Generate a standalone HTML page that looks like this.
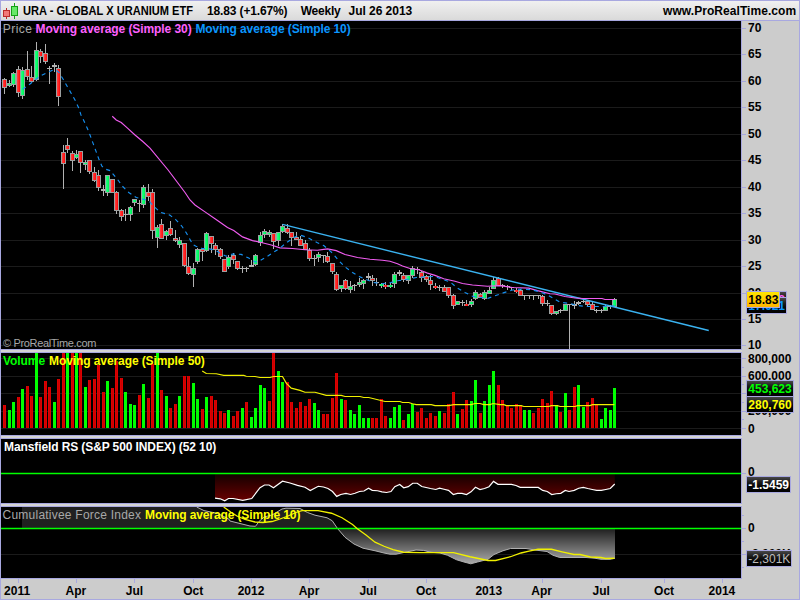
<!DOCTYPE html>
<html><head><meta charset="utf-8"><title>URA - GLOBAL X URANIUM ETF</title>
<style>html,body{margin:0;padding:0;background:#cccccc;overflow:hidden}svg{display:block;position:absolute;left:0;top:0}text{font-family:"Liberation Sans",sans-serif;font-weight:bold;font-size:12px}.c{shape-rendering:crispEdges}</style></head><body>
<svg width="800" height="600" viewBox="0 0 800 600">
<defs><linearGradient id="tb" x1="0" y1="0" x2="0" y2="1"><stop offset="0" stop-color="#f0f0f0"/><stop offset="1" stop-color="#dadada"/></linearGradient><linearGradient id="yl" x1="0" y1="0" x2="0" y2="1"><stop offset="0" stop-color="#ffe600"/><stop offset="1" stop-color="#ffb400"/></linearGradient><linearGradient id="dk" x1="0" y1="0" x2="0" y2="1"><stop offset="0" stop-color="#484848"/><stop offset="0.35" stop-color="#1c1c1c"/><stop offset="0.6" stop-color="#080808"/><stop offset="1" stop-color="#000000"/></linearGradient><linearGradient id="mr" gradientUnits="userSpaceOnUse" x1="0" y1="474" x2="0" y2="502"><stop offset="0" stop-color="#140000"/><stop offset="1" stop-color="#6c0000"/></linearGradient><linearGradient id="fg" gradientUnits="userSpaceOnUse" x1="0" y1="529" x2="0" y2="565"><stop offset="0" stop-color="#202020"/><stop offset="1" stop-color="#b0b0b0"/></linearGradient><clipPath id="cpP"><rect x="1" y="21" width="740" height="328"/></clipPath><clipPath id="cpV"><rect x="1" y="353" width="740" height="82"/></clipPath><clipPath id="cpM"><rect x="1" y="439" width="740" height="64"/></clipPath><clipPath id="cpF"><rect x="1" y="507" width="740" height="71"/></clipPath></defs>
<g class="c">
<rect x="0" y="0" width="800" height="600" fill="#a8a8e0"/>
<rect x="1" y="1" width="798" height="598" fill="#cccccc"/>
<rect x="1" y="1" width="798" height="19" fill="url(#tb)"/>
<rect x="1" y="20" width="798" height="1" fill="#a8a8e0"/>
<rect x="1" y="21" width="740" height="328" fill="#000"/>
<rect x="741" y="21" width="1" height="328" fill="#a8a8e0"/>
<rect x="1" y="353" width="740" height="82" fill="#000"/>
<rect x="741" y="353" width="1" height="82" fill="#a8a8e0"/>
<rect x="1" y="439" width="740" height="64" fill="#000"/>
<rect x="741" y="439" width="1" height="64" fill="#a8a8e0"/>
<rect x="1" y="507" width="740" height="71" fill="#000"/>
<rect x="741" y="507" width="1" height="71" fill="#a8a8e0"/>
<rect x="1" y="349" width="741" height="1" fill="#a8a8e0"/>
<rect x="1" y="350" width="741" height="2" fill="#d4d4d4"/>
<rect x="1" y="352" width="741" height="1" fill="#a8a8e0"/>
<rect x="1" y="435" width="741" height="1" fill="#a8a8e0"/>
<rect x="1" y="436" width="741" height="2" fill="#d4d4d4"/>
<rect x="1" y="438" width="741" height="1" fill="#a8a8e0"/>
<rect x="1" y="503" width="741" height="1" fill="#a8a8e0"/>
<rect x="1" y="504" width="741" height="2" fill="#d4d4d4"/>
<rect x="1" y="506" width="741" height="1" fill="#a8a8e0"/>
<rect x="1" y="578" width="741" height="1" fill="#a8a8e0"/>
<rect x="1" y="345" width="740" height="1" fill="#1b1b1b"/>
<rect x="742" y="345" width="4" height="1" fill="#a8a8e0"/>
<rect x="1" y="319" width="740" height="1" fill="#1b1b1b"/>
<rect x="742" y="319" width="4" height="1" fill="#a8a8e0"/>
<rect x="1" y="293" width="740" height="1" fill="#1b1b1b"/>
<rect x="742" y="293" width="4" height="1" fill="#a8a8e0"/>
<rect x="1" y="266" width="740" height="1" fill="#1b1b1b"/>
<rect x="742" y="266" width="4" height="1" fill="#a8a8e0"/>
<rect x="1" y="240" width="740" height="1" fill="#1b1b1b"/>
<rect x="742" y="240" width="4" height="1" fill="#a8a8e0"/>
<rect x="1" y="213" width="740" height="1" fill="#1b1b1b"/>
<rect x="742" y="213" width="4" height="1" fill="#a8a8e0"/>
<rect x="1" y="187" width="740" height="1" fill="#1b1b1b"/>
<rect x="742" y="187" width="4" height="1" fill="#a8a8e0"/>
<rect x="1" y="160" width="740" height="1" fill="#1b1b1b"/>
<rect x="742" y="160" width="4" height="1" fill="#a8a8e0"/>
<rect x="1" y="134" width="740" height="1" fill="#1b1b1b"/>
<rect x="742" y="134" width="4" height="1" fill="#a8a8e0"/>
<rect x="1" y="107" width="740" height="1" fill="#1b1b1b"/>
<rect x="742" y="107" width="4" height="1" fill="#a8a8e0"/>
<rect x="1" y="81" width="740" height="1" fill="#1b1b1b"/>
<rect x="742" y="81" width="4" height="1" fill="#a8a8e0"/>
<rect x="1" y="54" width="740" height="1" fill="#1b1b1b"/>
<rect x="742" y="54" width="4" height="1" fill="#a8a8e0"/>
<rect x="1" y="28" width="740" height="1" fill="#1b1b1b"/>
<rect x="742" y="28" width="4" height="1" fill="#a8a8e0"/>
<rect x="1" y="428" width="740" height="1" fill="#1b1b1b"/>
<rect x="1" y="411" width="740" height="1" fill="#1b1b1b"/>
<rect x="1" y="393" width="740" height="1" fill="#1b1b1b"/>
<rect x="1" y="376" width="740" height="1" fill="#1b1b1b"/>
<rect x="1" y="358" width="740" height="1" fill="#1b1b1b"/>
<rect x="742" y="428" width="4" height="1" fill="#a8a8e0"/>
<rect x="742" y="419" width="2" height="1" fill="#a8a8e0"/>
<rect x="742" y="411" width="4" height="1" fill="#a8a8e0"/>
<rect x="742" y="402" width="2" height="1" fill="#a8a8e0"/>
<rect x="742" y="393" width="4" height="1" fill="#a8a8e0"/>
<rect x="742" y="384" width="2" height="1" fill="#a8a8e0"/>
<rect x="742" y="376" width="4" height="1" fill="#a8a8e0"/>
<rect x="742" y="367" width="2" height="1" fill="#a8a8e0"/>
<rect x="742" y="358" width="4" height="1" fill="#a8a8e0"/>
<rect x="742" y="473" width="4" height="1" fill="#a8a8e0"/>
<rect x="1" y="554" width="740" height="1" fill="#1b1b1b"/>
<rect x="742" y="515" width="2" height="1" fill="#a8a8e0"/>
<rect x="742" y="528" width="4" height="1" fill="#a8a8e0"/>
<rect x="742" y="541" width="2" height="1" fill="#a8a8e0"/>
<rect x="742" y="554" width="4" height="1" fill="#a8a8e0"/>
<rect x="742" y="567" width="2" height="1" fill="#a8a8e0"/>
<rect x="18" y="579" width="1" height="4" fill="#a8a8e0"/>
<rect x="76" y="579" width="1" height="4" fill="#a8a8e0"/>
<rect x="134" y="579" width="1" height="4" fill="#a8a8e0"/>
<rect x="193" y="579" width="1" height="4" fill="#a8a8e0"/>
<rect x="251" y="579" width="1" height="4" fill="#a8a8e0"/>
<rect x="309" y="579" width="1" height="4" fill="#a8a8e0"/>
<rect x="368" y="579" width="1" height="4" fill="#a8a8e0"/>
<rect x="426" y="579" width="1" height="4" fill="#a8a8e0"/>
<rect x="489" y="579" width="1" height="4" fill="#a8a8e0"/>
<rect x="542" y="579" width="1" height="4" fill="#a8a8e0"/>
<rect x="601" y="579" width="1" height="4" fill="#a8a8e0"/>
<rect x="664" y="579" width="1" height="4" fill="#a8a8e0"/>
<rect x="722" y="579" width="1" height="4" fill="#a8a8e0"/>
</g>
<g clip-path="url(#cpP)">
<g class="c">
<rect x="4" y="78" width="1" height="16" fill="#b2b2b2"/>
<rect x="2" y="79" width="5" height="9" fill="#9ca0a0"/>
<rect x="3" y="80" width="1" height="7" fill="#ff3a3a"/>
<rect x="4" y="80" width="1" height="7" fill="#ff2626"/>
<rect x="5" y="80" width="1" height="7" fill="#ff1212"/>
<rect x="9" y="80" width="1" height="7" fill="#b2b2b2"/>
<rect x="7" y="83" width="5" height="3" fill="#9ca0a0"/>
<rect x="8" y="84" width="1" height="1" fill="#22ff80"/>
<rect x="9" y="84" width="1" height="1" fill="#10fc6e"/>
<rect x="10" y="84" width="1" height="1" fill="#00f85c"/>
<rect x="13" y="72" width="1" height="15" fill="#b2b2b2"/>
<rect x="11" y="73" width="5" height="12" fill="#9ca0a0"/>
<rect x="12" y="74" width="1" height="10" fill="#22ff80"/>
<rect x="13" y="74" width="1" height="10" fill="#10fc6e"/>
<rect x="14" y="74" width="1" height="10" fill="#00f85c"/>
<rect x="18" y="66" width="1" height="31" fill="#b2b2b2"/>
<rect x="16" y="69" width="5" height="24" fill="#9ca0a0"/>
<rect x="17" y="70" width="1" height="22" fill="#ff3a3a"/>
<rect x="18" y="70" width="1" height="22" fill="#ff2626"/>
<rect x="19" y="70" width="1" height="22" fill="#ff1212"/>
<rect x="22" y="67" width="1" height="32" fill="#b2b2b2"/>
<rect x="20" y="70" width="5" height="26" fill="#9ca0a0"/>
<rect x="21" y="71" width="1" height="24" fill="#22ff80"/>
<rect x="22" y="71" width="1" height="24" fill="#10fc6e"/>
<rect x="23" y="71" width="1" height="24" fill="#00f85c"/>
<rect x="27" y="51" width="1" height="29" fill="#b2b2b2"/>
<rect x="25" y="69" width="5" height="8" fill="#9ca0a0"/>
<rect x="26" y="70" width="1" height="6" fill="#ff3a3a"/>
<rect x="27" y="70" width="1" height="6" fill="#ff2626"/>
<rect x="28" y="70" width="1" height="6" fill="#ff1212"/>
<rect x="31" y="66" width="1" height="16" fill="#b2b2b2"/>
<rect x="29" y="77" width="5" height="5" fill="#9ca0a0"/>
<rect x="30" y="78" width="1" height="3" fill="#ff3a3a"/>
<rect x="31" y="78" width="1" height="3" fill="#ff2626"/>
<rect x="32" y="78" width="1" height="3" fill="#ff1212"/>
<rect x="36" y="42" width="1" height="39" fill="#b2b2b2"/>
<rect x="34" y="50" width="5" height="30" fill="#9ca0a0"/>
<rect x="35" y="51" width="1" height="28" fill="#22ff80"/>
<rect x="36" y="51" width="1" height="28" fill="#10fc6e"/>
<rect x="37" y="51" width="1" height="28" fill="#00f85c"/>
<rect x="40" y="49" width="1" height="14" fill="#b2b2b2"/>
<rect x="38" y="51" width="5" height="6" fill="#9ca0a0"/>
<rect x="39" y="52" width="1" height="4" fill="#ff3a3a"/>
<rect x="40" y="52" width="1" height="4" fill="#ff2626"/>
<rect x="41" y="52" width="1" height="4" fill="#ff1212"/>
<rect x="45" y="44" width="1" height="20" fill="#b2b2b2"/>
<rect x="43" y="53" width="5" height="9" fill="#9ca0a0"/>
<rect x="44" y="54" width="1" height="7" fill="#ff3a3a"/>
<rect x="45" y="54" width="1" height="7" fill="#ff2626"/>
<rect x="46" y="54" width="1" height="7" fill="#ff1212"/>
<rect x="49" y="66" width="1" height="18" fill="#b2b2b2"/>
<rect x="47" y="68" width="5" height="1" fill="#b2b2b2"/>
<rect x="54" y="63" width="1" height="9" fill="#b2b2b2"/>
<rect x="52" y="65" width="5" height="2" fill="#b2b2b2"/>
<rect x="58" y="65" width="1" height="41" fill="#b2b2b2"/>
<rect x="56" y="68" width="5" height="29" fill="#9ca0a0"/>
<rect x="57" y="69" width="1" height="27" fill="#ff3a3a"/>
<rect x="58" y="69" width="1" height="27" fill="#ff2626"/>
<rect x="59" y="69" width="1" height="27" fill="#ff1212"/>
<rect x="63" y="145" width="1" height="44" fill="#b2b2b2"/>
<rect x="61" y="152" width="5" height="12" fill="#9ca0a0"/>
<rect x="62" y="153" width="1" height="10" fill="#ff3a3a"/>
<rect x="63" y="153" width="1" height="10" fill="#ff2626"/>
<rect x="64" y="153" width="1" height="10" fill="#ff1212"/>
<rect x="67" y="138" width="1" height="15" fill="#b2b2b2"/>
<rect x="65" y="145" width="5" height="5" fill="#9ca0a0"/>
<rect x="66" y="146" width="1" height="3" fill="#ff3a3a"/>
<rect x="67" y="146" width="1" height="3" fill="#ff2626"/>
<rect x="68" y="146" width="1" height="3" fill="#ff1212"/>
<rect x="72" y="151" width="1" height="20" fill="#b2b2b2"/>
<rect x="70" y="153" width="5" height="8" fill="#9ca0a0"/>
<rect x="71" y="154" width="1" height="6" fill="#ff3a3a"/>
<rect x="72" y="154" width="1" height="6" fill="#ff2626"/>
<rect x="73" y="154" width="1" height="6" fill="#ff1212"/>
<rect x="76" y="150" width="1" height="9" fill="#b2b2b2"/>
<rect x="74" y="154" width="5" height="4" fill="#9ca0a0"/>
<rect x="75" y="155" width="1" height="2" fill="#22ff80"/>
<rect x="76" y="155" width="1" height="2" fill="#10fc6e"/>
<rect x="77" y="155" width="1" height="2" fill="#00f85c"/>
<rect x="80" y="151" width="1" height="22" fill="#b2b2b2"/>
<rect x="78" y="151" width="5" height="12" fill="#9ca0a0"/>
<rect x="79" y="152" width="1" height="10" fill="#ff3a3a"/>
<rect x="80" y="152" width="1" height="10" fill="#ff2626"/>
<rect x="81" y="152" width="1" height="10" fill="#ff1212"/>
<rect x="85" y="160" width="1" height="10" fill="#b2b2b2"/>
<rect x="83" y="162" width="5" height="3" fill="#9ca0a0"/>
<rect x="84" y="163" width="1" height="1" fill="#22ff80"/>
<rect x="85" y="163" width="1" height="1" fill="#10fc6e"/>
<rect x="86" y="163" width="1" height="1" fill="#00f85c"/>
<rect x="89" y="160" width="1" height="14" fill="#b2b2b2"/>
<rect x="87" y="160" width="5" height="12" fill="#9ca0a0"/>
<rect x="88" y="161" width="1" height="10" fill="#ff3a3a"/>
<rect x="89" y="161" width="1" height="10" fill="#ff2626"/>
<rect x="90" y="161" width="1" height="10" fill="#ff1212"/>
<rect x="94" y="167" width="1" height="15" fill="#b2b2b2"/>
<rect x="92" y="172" width="5" height="9" fill="#9ca0a0"/>
<rect x="93" y="173" width="1" height="7" fill="#ff3a3a"/>
<rect x="94" y="173" width="1" height="7" fill="#ff2626"/>
<rect x="95" y="173" width="1" height="7" fill="#ff1212"/>
<rect x="98" y="170" width="1" height="21" fill="#b2b2b2"/>
<rect x="96" y="175" width="5" height="13" fill="#9ca0a0"/>
<rect x="97" y="176" width="1" height="11" fill="#ff3a3a"/>
<rect x="98" y="176" width="1" height="11" fill="#ff2626"/>
<rect x="99" y="176" width="1" height="11" fill="#ff1212"/>
<rect x="103" y="185" width="1" height="11" fill="#b2b2b2"/>
<rect x="101" y="189" width="5" height="2" fill="#b2b2b2"/>
<rect x="107" y="175" width="1" height="21" fill="#b2b2b2"/>
<rect x="105" y="175" width="5" height="18" fill="#9ca0a0"/>
<rect x="106" y="176" width="1" height="16" fill="#22ff80"/>
<rect x="107" y="176" width="1" height="16" fill="#10fc6e"/>
<rect x="108" y="176" width="1" height="16" fill="#00f85c"/>
<rect x="112" y="179" width="1" height="14" fill="#b2b2b2"/>
<rect x="110" y="179" width="5" height="14" fill="#9ca0a0"/>
<rect x="111" y="180" width="1" height="12" fill="#ff3a3a"/>
<rect x="112" y="180" width="1" height="12" fill="#ff2626"/>
<rect x="113" y="180" width="1" height="12" fill="#ff1212"/>
<rect x="116" y="191" width="1" height="23" fill="#b2b2b2"/>
<rect x="114" y="192" width="5" height="19" fill="#9ca0a0"/>
<rect x="115" y="193" width="1" height="17" fill="#ff3a3a"/>
<rect x="116" y="193" width="1" height="17" fill="#ff2626"/>
<rect x="117" y="193" width="1" height="17" fill="#ff1212"/>
<rect x="121" y="209" width="1" height="12" fill="#b2b2b2"/>
<rect x="119" y="210" width="5" height="7" fill="#9ca0a0"/>
<rect x="120" y="211" width="1" height="5" fill="#ff3a3a"/>
<rect x="121" y="211" width="1" height="5" fill="#ff2626"/>
<rect x="122" y="211" width="1" height="5" fill="#ff1212"/>
<rect x="125" y="209" width="1" height="12" fill="#b2b2b2"/>
<rect x="123" y="214" width="5" height="1" fill="#b2b2b2"/>
<rect x="130" y="206" width="1" height="15" fill="#b2b2b2"/>
<rect x="128" y="207" width="5" height="8" fill="#9ca0a0"/>
<rect x="129" y="208" width="1" height="6" fill="#22ff80"/>
<rect x="130" y="208" width="1" height="6" fill="#10fc6e"/>
<rect x="131" y="208" width="1" height="6" fill="#00f85c"/>
<rect x="134" y="199" width="1" height="7" fill="#b2b2b2"/>
<rect x="132" y="199" width="5" height="4" fill="#9ca0a0"/>
<rect x="133" y="200" width="1" height="2" fill="#22ff80"/>
<rect x="134" y="200" width="1" height="2" fill="#10fc6e"/>
<rect x="135" y="200" width="1" height="2" fill="#00f85c"/>
<rect x="139" y="200" width="1" height="12" fill="#b2b2b2"/>
<rect x="137" y="203" width="5" height="1" fill="#b2b2b2"/>
<rect x="143" y="185" width="1" height="23" fill="#b2b2b2"/>
<rect x="141" y="187" width="5" height="18" fill="#9ca0a0"/>
<rect x="142" y="188" width="1" height="16" fill="#22ff80"/>
<rect x="143" y="188" width="1" height="16" fill="#10fc6e"/>
<rect x="144" y="188" width="1" height="16" fill="#00f85c"/>
<rect x="148" y="184" width="1" height="17" fill="#b2b2b2"/>
<rect x="146" y="192" width="5" height="5" fill="#9ca0a0"/>
<rect x="147" y="193" width="1" height="3" fill="#ff3a3a"/>
<rect x="148" y="193" width="1" height="3" fill="#ff2626"/>
<rect x="149" y="193" width="1" height="3" fill="#ff1212"/>
<rect x="152" y="189" width="1" height="50" fill="#b2b2b2"/>
<rect x="150" y="192" width="5" height="39" fill="#9ca0a0"/>
<rect x="151" y="193" width="1" height="37" fill="#ff3a3a"/>
<rect x="152" y="193" width="1" height="37" fill="#ff2626"/>
<rect x="153" y="193" width="1" height="37" fill="#ff1212"/>
<rect x="157" y="225" width="1" height="23" fill="#b2b2b2"/>
<rect x="155" y="227" width="5" height="11" fill="#9ca0a0"/>
<rect x="156" y="228" width="1" height="9" fill="#22ff80"/>
<rect x="157" y="228" width="1" height="9" fill="#10fc6e"/>
<rect x="158" y="228" width="1" height="9" fill="#00f85c"/>
<rect x="161" y="219" width="1" height="20" fill="#b2b2b2"/>
<rect x="159" y="224" width="5" height="15" fill="#9ca0a0"/>
<rect x="160" y="225" width="1" height="13" fill="#ff3a3a"/>
<rect x="161" y="225" width="1" height="13" fill="#ff2626"/>
<rect x="162" y="225" width="1" height="13" fill="#ff1212"/>
<rect x="166" y="230" width="1" height="10" fill="#b2b2b2"/>
<rect x="164" y="231" width="5" height="5" fill="#9ca0a0"/>
<rect x="165" y="232" width="1" height="3" fill="#22ff80"/>
<rect x="166" y="232" width="1" height="3" fill="#10fc6e"/>
<rect x="167" y="232" width="1" height="3" fill="#00f85c"/>
<rect x="170" y="221" width="1" height="15" fill="#b2b2b2"/>
<rect x="168" y="228" width="5" height="7" fill="#9ca0a0"/>
<rect x="169" y="229" width="1" height="5" fill="#ff3a3a"/>
<rect x="170" y="229" width="1" height="5" fill="#ff2626"/>
<rect x="171" y="229" width="1" height="5" fill="#ff1212"/>
<rect x="175" y="230" width="1" height="12" fill="#b2b2b2"/>
<rect x="173" y="238" width="5" height="3" fill="#9ca0a0"/>
<rect x="174" y="239" width="1" height="1" fill="#ff3a3a"/>
<rect x="175" y="239" width="1" height="1" fill="#ff2626"/>
<rect x="176" y="239" width="1" height="1" fill="#ff1212"/>
<rect x="179" y="237" width="1" height="11" fill="#b2b2b2"/>
<rect x="177" y="240" width="5" height="5" fill="#9ca0a0"/>
<rect x="178" y="241" width="1" height="3" fill="#22ff80"/>
<rect x="179" y="241" width="1" height="3" fill="#10fc6e"/>
<rect x="180" y="241" width="1" height="3" fill="#00f85c"/>
<rect x="184" y="243" width="1" height="24" fill="#b2b2b2"/>
<rect x="182" y="243" width="5" height="23" fill="#9ca0a0"/>
<rect x="183" y="244" width="1" height="21" fill="#ff3a3a"/>
<rect x="184" y="244" width="1" height="21" fill="#ff2626"/>
<rect x="185" y="244" width="1" height="21" fill="#ff1212"/>
<rect x="188" y="257" width="1" height="18" fill="#b2b2b2"/>
<rect x="186" y="266" width="5" height="8" fill="#9ca0a0"/>
<rect x="187" y="267" width="1" height="6" fill="#ff3a3a"/>
<rect x="188" y="267" width="1" height="6" fill="#ff2626"/>
<rect x="189" y="267" width="1" height="6" fill="#ff1212"/>
<rect x="193" y="263" width="1" height="24" fill="#b2b2b2"/>
<rect x="191" y="268" width="5" height="7" fill="#9ca0a0"/>
<rect x="192" y="269" width="1" height="5" fill="#22ff80"/>
<rect x="193" y="269" width="1" height="5" fill="#10fc6e"/>
<rect x="194" y="269" width="1" height="5" fill="#00f85c"/>
<rect x="197" y="248" width="1" height="16" fill="#b2b2b2"/>
<rect x="195" y="249" width="5" height="13" fill="#9ca0a0"/>
<rect x="196" y="250" width="1" height="11" fill="#22ff80"/>
<rect x="197" y="250" width="1" height="11" fill="#10fc6e"/>
<rect x="198" y="250" width="1" height="11" fill="#00f85c"/>
<rect x="202" y="249" width="1" height="12" fill="#b2b2b2"/>
<rect x="200" y="249" width="5" height="3" fill="#9ca0a0"/>
<rect x="201" y="250" width="1" height="1" fill="#ff3a3a"/>
<rect x="202" y="250" width="1" height="1" fill="#ff2626"/>
<rect x="203" y="250" width="1" height="1" fill="#ff1212"/>
<rect x="206" y="232" width="1" height="20" fill="#b2b2b2"/>
<rect x="204" y="233" width="5" height="18" fill="#9ca0a0"/>
<rect x="205" y="234" width="1" height="16" fill="#22ff80"/>
<rect x="206" y="234" width="1" height="16" fill="#10fc6e"/>
<rect x="207" y="234" width="1" height="16" fill="#00f85c"/>
<rect x="211" y="236" width="1" height="17" fill="#b2b2b2"/>
<rect x="209" y="236" width="5" height="8" fill="#9ca0a0"/>
<rect x="210" y="237" width="1" height="6" fill="#ff3a3a"/>
<rect x="211" y="237" width="1" height="6" fill="#ff2626"/>
<rect x="212" y="237" width="1" height="6" fill="#ff1212"/>
<rect x="215" y="243" width="1" height="12" fill="#b2b2b2"/>
<rect x="213" y="245" width="5" height="5" fill="#9ca0a0"/>
<rect x="214" y="246" width="1" height="3" fill="#ff3a3a"/>
<rect x="215" y="246" width="1" height="3" fill="#ff2626"/>
<rect x="216" y="246" width="1" height="3" fill="#ff1212"/>
<rect x="220" y="248" width="1" height="11" fill="#b2b2b2"/>
<rect x="218" y="249" width="5" height="8" fill="#9ca0a0"/>
<rect x="219" y="250" width="1" height="6" fill="#ff3a3a"/>
<rect x="220" y="250" width="1" height="6" fill="#ff2626"/>
<rect x="221" y="250" width="1" height="6" fill="#ff1212"/>
<rect x="224" y="259" width="1" height="13" fill="#b2b2b2"/>
<rect x="222" y="259" width="5" height="13" fill="#9ca0a0"/>
<rect x="223" y="260" width="1" height="11" fill="#ff3a3a"/>
<rect x="224" y="260" width="1" height="11" fill="#ff2626"/>
<rect x="225" y="260" width="1" height="11" fill="#ff1212"/>
<rect x="228" y="255" width="1" height="14" fill="#b2b2b2"/>
<rect x="226" y="257" width="5" height="10" fill="#9ca0a0"/>
<rect x="227" y="258" width="1" height="8" fill="#22ff80"/>
<rect x="228" y="258" width="1" height="8" fill="#10fc6e"/>
<rect x="229" y="258" width="1" height="8" fill="#00f85c"/>
<rect x="233" y="253" width="1" height="11" fill="#b2b2b2"/>
<rect x="231" y="255" width="5" height="5" fill="#9ca0a0"/>
<rect x="232" y="256" width="1" height="3" fill="#ff3a3a"/>
<rect x="233" y="256" width="1" height="3" fill="#ff2626"/>
<rect x="234" y="256" width="1" height="3" fill="#ff1212"/>
<rect x="237" y="261" width="1" height="9" fill="#b2b2b2"/>
<rect x="235" y="261" width="5" height="8" fill="#9ca0a0"/>
<rect x="236" y="262" width="1" height="6" fill="#ff3a3a"/>
<rect x="237" y="262" width="1" height="6" fill="#ff2626"/>
<rect x="238" y="262" width="1" height="6" fill="#ff1212"/>
<rect x="242" y="266" width="1" height="7" fill="#b2b2b2"/>
<rect x="240" y="268" width="5" height="1" fill="#b2b2b2"/>
<rect x="246" y="267" width="1" height="5" fill="#b2b2b2"/>
<rect x="244" y="268" width="5" height="1" fill="#b2b2b2"/>
<rect x="251" y="260" width="1" height="7" fill="#b2b2b2"/>
<rect x="249" y="265" width="5" height="2" fill="#b2b2b2"/>
<rect x="255" y="254" width="1" height="12" fill="#b2b2b2"/>
<rect x="253" y="255" width="5" height="10" fill="#9ca0a0"/>
<rect x="254" y="256" width="1" height="8" fill="#22ff80"/>
<rect x="255" y="256" width="1" height="8" fill="#10fc6e"/>
<rect x="256" y="256" width="1" height="8" fill="#00f85c"/>
<rect x="260" y="232" width="1" height="14" fill="#b2b2b2"/>
<rect x="258" y="235" width="5" height="8" fill="#9ca0a0"/>
<rect x="259" y="236" width="1" height="6" fill="#22ff80"/>
<rect x="260" y="236" width="1" height="6" fill="#10fc6e"/>
<rect x="261" y="236" width="1" height="6" fill="#00f85c"/>
<rect x="264" y="229" width="1" height="9" fill="#b2b2b2"/>
<rect x="262" y="231" width="5" height="4" fill="#9ca0a0"/>
<rect x="263" y="232" width="1" height="2" fill="#22ff80"/>
<rect x="264" y="232" width="1" height="2" fill="#10fc6e"/>
<rect x="265" y="232" width="1" height="2" fill="#00f85c"/>
<rect x="269" y="230" width="1" height="7" fill="#b2b2b2"/>
<rect x="267" y="232" width="5" height="3" fill="#9ca0a0"/>
<rect x="268" y="233" width="1" height="1" fill="#22ff80"/>
<rect x="269" y="233" width="1" height="1" fill="#10fc6e"/>
<rect x="270" y="233" width="1" height="1" fill="#00f85c"/>
<rect x="273" y="233" width="1" height="16" fill="#b2b2b2"/>
<rect x="271" y="233" width="5" height="9" fill="#9ca0a0"/>
<rect x="272" y="234" width="1" height="7" fill="#ff3a3a"/>
<rect x="273" y="234" width="1" height="7" fill="#ff2626"/>
<rect x="274" y="234" width="1" height="7" fill="#ff1212"/>
<rect x="278" y="232" width="1" height="14" fill="#b2b2b2"/>
<rect x="276" y="232" width="5" height="9" fill="#9ca0a0"/>
<rect x="277" y="233" width="1" height="7" fill="#22ff80"/>
<rect x="278" y="233" width="1" height="7" fill="#10fc6e"/>
<rect x="279" y="233" width="1" height="7" fill="#00f85c"/>
<rect x="282" y="224" width="1" height="9" fill="#b2b2b2"/>
<rect x="280" y="226" width="5" height="6" fill="#9ca0a0"/>
<rect x="281" y="227" width="1" height="4" fill="#22ff80"/>
<rect x="282" y="227" width="1" height="4" fill="#10fc6e"/>
<rect x="283" y="227" width="1" height="4" fill="#00f85c"/>
<rect x="287" y="224" width="1" height="10" fill="#b2b2b2"/>
<rect x="285" y="228" width="5" height="5" fill="#9ca0a0"/>
<rect x="286" y="229" width="1" height="3" fill="#ff3a3a"/>
<rect x="287" y="229" width="1" height="3" fill="#ff2626"/>
<rect x="288" y="229" width="1" height="3" fill="#ff1212"/>
<rect x="291" y="232" width="1" height="14" fill="#b2b2b2"/>
<rect x="289" y="232" width="5" height="6" fill="#9ca0a0"/>
<rect x="290" y="233" width="1" height="4" fill="#ff3a3a"/>
<rect x="291" y="233" width="1" height="4" fill="#ff2626"/>
<rect x="292" y="233" width="1" height="4" fill="#ff1212"/>
<rect x="296" y="232" width="1" height="8" fill="#b2b2b2"/>
<rect x="294" y="237" width="5" height="3" fill="#9ca0a0"/>
<rect x="295" y="238" width="1" height="1" fill="#ff3a3a"/>
<rect x="296" y="238" width="1" height="1" fill="#ff2626"/>
<rect x="297" y="238" width="1" height="1" fill="#ff1212"/>
<rect x="300" y="236" width="1" height="10" fill="#b2b2b2"/>
<rect x="298" y="239" width="5" height="7" fill="#9ca0a0"/>
<rect x="299" y="240" width="1" height="5" fill="#ff3a3a"/>
<rect x="300" y="240" width="1" height="5" fill="#ff2626"/>
<rect x="301" y="240" width="1" height="5" fill="#ff1212"/>
<rect x="305" y="240" width="1" height="10" fill="#b2b2b2"/>
<rect x="303" y="243" width="5" height="7" fill="#9ca0a0"/>
<rect x="304" y="244" width="1" height="5" fill="#ff3a3a"/>
<rect x="305" y="244" width="1" height="5" fill="#ff2626"/>
<rect x="306" y="244" width="1" height="5" fill="#ff1212"/>
<rect x="309" y="248" width="1" height="13" fill="#b2b2b2"/>
<rect x="307" y="250" width="5" height="9" fill="#9ca0a0"/>
<rect x="308" y="251" width="1" height="7" fill="#ff3a3a"/>
<rect x="309" y="251" width="1" height="7" fill="#ff2626"/>
<rect x="310" y="251" width="1" height="7" fill="#ff1212"/>
<rect x="314" y="255" width="1" height="11" fill="#b2b2b2"/>
<rect x="312" y="258" width="5" height="1" fill="#b2b2b2"/>
<rect x="318" y="252" width="1" height="10" fill="#b2b2b2"/>
<rect x="316" y="254" width="5" height="4" fill="#9ca0a0"/>
<rect x="317" y="255" width="1" height="2" fill="#22ff80"/>
<rect x="318" y="255" width="1" height="2" fill="#10fc6e"/>
<rect x="319" y="255" width="1" height="2" fill="#00f85c"/>
<rect x="323" y="255" width="1" height="8" fill="#b2b2b2"/>
<rect x="321" y="255" width="5" height="1" fill="#b2b2b2"/>
<rect x="327" y="252" width="1" height="11" fill="#b2b2b2"/>
<rect x="325" y="256" width="5" height="6" fill="#9ca0a0"/>
<rect x="326" y="257" width="1" height="4" fill="#ff3a3a"/>
<rect x="327" y="257" width="1" height="4" fill="#ff2626"/>
<rect x="328" y="257" width="1" height="4" fill="#ff1212"/>
<rect x="332" y="263" width="1" height="11" fill="#b2b2b2"/>
<rect x="330" y="263" width="5" height="9" fill="#9ca0a0"/>
<rect x="331" y="264" width="1" height="7" fill="#ff3a3a"/>
<rect x="332" y="264" width="1" height="7" fill="#ff2626"/>
<rect x="333" y="264" width="1" height="7" fill="#ff1212"/>
<rect x="336" y="272" width="1" height="19" fill="#b2b2b2"/>
<rect x="334" y="274" width="5" height="16" fill="#9ca0a0"/>
<rect x="335" y="275" width="1" height="14" fill="#ff3a3a"/>
<rect x="336" y="275" width="1" height="14" fill="#ff2626"/>
<rect x="337" y="275" width="1" height="14" fill="#ff1212"/>
<rect x="341" y="285" width="1" height="7" fill="#b2b2b2"/>
<rect x="339" y="285" width="5" height="4" fill="#9ca0a0"/>
<rect x="340" y="286" width="1" height="2" fill="#22ff80"/>
<rect x="341" y="286" width="1" height="2" fill="#10fc6e"/>
<rect x="342" y="286" width="1" height="2" fill="#00f85c"/>
<rect x="345" y="279" width="1" height="11" fill="#b2b2b2"/>
<rect x="343" y="280" width="5" height="9" fill="#9ca0a0"/>
<rect x="344" y="281" width="1" height="7" fill="#ff3a3a"/>
<rect x="345" y="281" width="1" height="7" fill="#ff2626"/>
<rect x="346" y="281" width="1" height="7" fill="#ff1212"/>
<rect x="350" y="281" width="1" height="12" fill="#b2b2b2"/>
<rect x="348" y="286" width="5" height="4" fill="#9ca0a0"/>
<rect x="349" y="287" width="1" height="2" fill="#22ff80"/>
<rect x="350" y="287" width="1" height="2" fill="#10fc6e"/>
<rect x="351" y="287" width="1" height="2" fill="#00f85c"/>
<rect x="354" y="284" width="1" height="7" fill="#b2b2b2"/>
<rect x="352" y="285" width="5" height="1" fill="#b2b2b2"/>
<rect x="359" y="278" width="1" height="9" fill="#b2b2b2"/>
<rect x="357" y="282" width="5" height="3" fill="#9ca0a0"/>
<rect x="358" y="283" width="1" height="1" fill="#22ff80"/>
<rect x="359" y="283" width="1" height="1" fill="#10fc6e"/>
<rect x="360" y="283" width="1" height="1" fill="#00f85c"/>
<rect x="363" y="279" width="1" height="10" fill="#b2b2b2"/>
<rect x="361" y="280" width="5" height="4" fill="#9ca0a0"/>
<rect x="362" y="281" width="1" height="2" fill="#22ff80"/>
<rect x="363" y="281" width="1" height="2" fill="#10fc6e"/>
<rect x="364" y="281" width="1" height="2" fill="#00f85c"/>
<rect x="368" y="273" width="1" height="8" fill="#b2b2b2"/>
<rect x="366" y="276" width="5" height="2" fill="#b2b2b2"/>
<rect x="372" y="275" width="1" height="11" fill="#b2b2b2"/>
<rect x="370" y="278" width="5" height="3" fill="#9ca0a0"/>
<rect x="371" y="279" width="1" height="1" fill="#ff3a3a"/>
<rect x="372" y="279" width="1" height="1" fill="#ff2626"/>
<rect x="373" y="279" width="1" height="1" fill="#ff1212"/>
<rect x="376" y="278" width="1" height="8" fill="#b2b2b2"/>
<rect x="374" y="282" width="5" height="1" fill="#b2b2b2"/>
<rect x="381" y="283" width="1" height="5" fill="#b2b2b2"/>
<rect x="379" y="284" width="5" height="2" fill="#9ca0a0"/>
<rect x="380" y="284" width="1" height="2" fill="#22ff80"/>
<rect x="381" y="284" width="1" height="2" fill="#10fc6e"/>
<rect x="382" y="284" width="1" height="2" fill="#00f85c"/>
<rect x="385" y="282" width="1" height="7" fill="#b2b2b2"/>
<rect x="383" y="285" width="5" height="2" fill="#9ca0a0"/>
<rect x="384" y="285" width="1" height="2" fill="#ff3a3a"/>
<rect x="385" y="285" width="1" height="2" fill="#ff2626"/>
<rect x="386" y="285" width="1" height="2" fill="#ff1212"/>
<rect x="390" y="283" width="1" height="5" fill="#b2b2b2"/>
<rect x="388" y="285" width="5" height="2" fill="#9ca0a0"/>
<rect x="389" y="285" width="1" height="2" fill="#22ff80"/>
<rect x="390" y="285" width="1" height="2" fill="#10fc6e"/>
<rect x="391" y="285" width="1" height="2" fill="#00f85c"/>
<rect x="394" y="272" width="1" height="16" fill="#b2b2b2"/>
<rect x="392" y="274" width="5" height="10" fill="#9ca0a0"/>
<rect x="393" y="275" width="1" height="8" fill="#22ff80"/>
<rect x="394" y="275" width="1" height="8" fill="#10fc6e"/>
<rect x="395" y="275" width="1" height="8" fill="#00f85c"/>
<rect x="399" y="270" width="1" height="6" fill="#b2b2b2"/>
<rect x="397" y="272" width="5" height="2" fill="#b2b2b2"/>
<rect x="403" y="273" width="1" height="9" fill="#b2b2b2"/>
<rect x="401" y="275" width="5" height="5" fill="#9ca0a0"/>
<rect x="402" y="276" width="1" height="3" fill="#ff3a3a"/>
<rect x="403" y="276" width="1" height="3" fill="#ff2626"/>
<rect x="404" y="276" width="1" height="3" fill="#ff1212"/>
<rect x="408" y="275" width="1" height="9" fill="#b2b2b2"/>
<rect x="406" y="275" width="5" height="6" fill="#9ca0a0"/>
<rect x="407" y="276" width="1" height="4" fill="#22ff80"/>
<rect x="408" y="276" width="1" height="4" fill="#10fc6e"/>
<rect x="409" y="276" width="1" height="4" fill="#00f85c"/>
<rect x="412" y="266" width="1" height="12" fill="#b2b2b2"/>
<rect x="410" y="268" width="5" height="8" fill="#9ca0a0"/>
<rect x="411" y="269" width="1" height="6" fill="#22ff80"/>
<rect x="412" y="269" width="1" height="6" fill="#10fc6e"/>
<rect x="413" y="269" width="1" height="6" fill="#00f85c"/>
<rect x="417" y="267" width="1" height="7" fill="#b2b2b2"/>
<rect x="415" y="269" width="5" height="1" fill="#b2b2b2"/>
<rect x="421" y="271" width="1" height="11" fill="#b2b2b2"/>
<rect x="419" y="272" width="5" height="6" fill="#9ca0a0"/>
<rect x="420" y="273" width="1" height="4" fill="#ff3a3a"/>
<rect x="421" y="273" width="1" height="4" fill="#ff2626"/>
<rect x="422" y="273" width="1" height="4" fill="#ff1212"/>
<rect x="426" y="275" width="1" height="7" fill="#b2b2b2"/>
<rect x="424" y="276" width="5" height="4" fill="#9ca0a0"/>
<rect x="425" y="277" width="1" height="2" fill="#ff3a3a"/>
<rect x="426" y="277" width="1" height="2" fill="#ff2626"/>
<rect x="427" y="277" width="1" height="2" fill="#ff1212"/>
<rect x="430" y="275" width="1" height="15" fill="#b2b2b2"/>
<rect x="428" y="280" width="5" height="5" fill="#9ca0a0"/>
<rect x="429" y="281" width="1" height="3" fill="#ff3a3a"/>
<rect x="430" y="281" width="1" height="3" fill="#ff2626"/>
<rect x="431" y="281" width="1" height="3" fill="#ff1212"/>
<rect x="435" y="283" width="1" height="6" fill="#b2b2b2"/>
<rect x="433" y="286" width="5" height="2" fill="#9ca0a0"/>
<rect x="434" y="286" width="1" height="2" fill="#ff3a3a"/>
<rect x="435" y="286" width="1" height="2" fill="#ff2626"/>
<rect x="436" y="286" width="1" height="2" fill="#ff1212"/>
<rect x="439" y="285" width="1" height="6" fill="#b2b2b2"/>
<rect x="437" y="287" width="5" height="1" fill="#b2b2b2"/>
<rect x="444" y="285" width="1" height="7" fill="#b2b2b2"/>
<rect x="442" y="287" width="5" height="5" fill="#9ca0a0"/>
<rect x="443" y="288" width="1" height="3" fill="#ff3a3a"/>
<rect x="444" y="288" width="1" height="3" fill="#ff2626"/>
<rect x="445" y="288" width="1" height="3" fill="#ff1212"/>
<rect x="448" y="287" width="1" height="11" fill="#b2b2b2"/>
<rect x="446" y="287" width="5" height="9" fill="#9ca0a0"/>
<rect x="447" y="288" width="1" height="7" fill="#ff3a3a"/>
<rect x="448" y="288" width="1" height="7" fill="#ff2626"/>
<rect x="449" y="288" width="1" height="7" fill="#ff1212"/>
<rect x="453" y="294" width="1" height="15" fill="#b2b2b2"/>
<rect x="451" y="295" width="5" height="11" fill="#9ca0a0"/>
<rect x="452" y="296" width="1" height="9" fill="#ff3a3a"/>
<rect x="453" y="296" width="1" height="9" fill="#ff2626"/>
<rect x="454" y="296" width="1" height="9" fill="#ff1212"/>
<rect x="457" y="301" width="1" height="4" fill="#b2b2b2"/>
<rect x="455" y="301" width="5" height="4" fill="#9ca0a0"/>
<rect x="456" y="302" width="1" height="2" fill="#22ff80"/>
<rect x="457" y="302" width="1" height="2" fill="#10fc6e"/>
<rect x="458" y="302" width="1" height="2" fill="#00f85c"/>
<rect x="462" y="300" width="1" height="6" fill="#b2b2b2"/>
<rect x="460" y="302" width="5" height="1" fill="#b2b2b2"/>
<rect x="466" y="300" width="1" height="6" fill="#b2b2b2"/>
<rect x="464" y="304" width="5" height="2" fill="#9ca0a0"/>
<rect x="465" y="304" width="1" height="2" fill="#ff3a3a"/>
<rect x="466" y="304" width="1" height="2" fill="#ff2626"/>
<rect x="467" y="304" width="1" height="2" fill="#ff1212"/>
<rect x="471" y="299" width="1" height="8" fill="#b2b2b2"/>
<rect x="469" y="301" width="5" height="4" fill="#9ca0a0"/>
<rect x="470" y="302" width="1" height="2" fill="#22ff80"/>
<rect x="471" y="302" width="1" height="2" fill="#10fc6e"/>
<rect x="472" y="302" width="1" height="2" fill="#00f85c"/>
<rect x="475" y="290" width="1" height="10" fill="#b2b2b2"/>
<rect x="473" y="292" width="5" height="7" fill="#9ca0a0"/>
<rect x="474" y="293" width="1" height="5" fill="#22ff80"/>
<rect x="475" y="293" width="1" height="5" fill="#10fc6e"/>
<rect x="476" y="293" width="1" height="5" fill="#00f85c"/>
<rect x="480" y="293" width="1" height="5" fill="#b2b2b2"/>
<rect x="478" y="294" width="5" height="4" fill="#9ca0a0"/>
<rect x="479" y="295" width="1" height="2" fill="#ff3a3a"/>
<rect x="480" y="295" width="1" height="2" fill="#ff2626"/>
<rect x="481" y="295" width="1" height="2" fill="#ff1212"/>
<rect x="484" y="290" width="1" height="10" fill="#b2b2b2"/>
<rect x="482" y="292" width="5" height="7" fill="#9ca0a0"/>
<rect x="483" y="293" width="1" height="5" fill="#22ff80"/>
<rect x="484" y="293" width="1" height="5" fill="#10fc6e"/>
<rect x="485" y="293" width="1" height="5" fill="#00f85c"/>
<rect x="489" y="287" width="1" height="7" fill="#b2b2b2"/>
<rect x="487" y="290" width="5" height="4" fill="#9ca0a0"/>
<rect x="488" y="291" width="1" height="2" fill="#22ff80"/>
<rect x="489" y="291" width="1" height="2" fill="#10fc6e"/>
<rect x="490" y="291" width="1" height="2" fill="#00f85c"/>
<rect x="493" y="277" width="1" height="12" fill="#b2b2b2"/>
<rect x="491" y="280" width="5" height="9" fill="#9ca0a0"/>
<rect x="492" y="281" width="1" height="7" fill="#22ff80"/>
<rect x="493" y="281" width="1" height="7" fill="#10fc6e"/>
<rect x="494" y="281" width="1" height="7" fill="#00f85c"/>
<rect x="498" y="277" width="1" height="9" fill="#b2b2b2"/>
<rect x="496" y="278" width="5" height="8" fill="#9ca0a0"/>
<rect x="497" y="279" width="1" height="6" fill="#ff3a3a"/>
<rect x="498" y="279" width="1" height="6" fill="#ff2626"/>
<rect x="499" y="279" width="1" height="6" fill="#ff1212"/>
<rect x="502" y="284" width="1" height="4" fill="#b2b2b2"/>
<rect x="500" y="285" width="5" height="1" fill="#b2b2b2"/>
<rect x="507" y="285" width="1" height="5" fill="#b2b2b2"/>
<rect x="505" y="286" width="5" height="1" fill="#b2b2b2"/>
<rect x="511" y="287" width="1" height="3" fill="#b2b2b2"/>
<rect x="509" y="287" width="5" height="1" fill="#b2b2b2"/>
<rect x="516" y="288" width="1" height="5" fill="#b2b2b2"/>
<rect x="514" y="290" width="5" height="2" fill="#9ca0a0"/>
<rect x="515" y="290" width="1" height="2" fill="#ff3a3a"/>
<rect x="516" y="290" width="1" height="2" fill="#ff2626"/>
<rect x="517" y="290" width="1" height="2" fill="#ff1212"/>
<rect x="520" y="289" width="1" height="7" fill="#b2b2b2"/>
<rect x="518" y="290" width="5" height="6" fill="#9ca0a0"/>
<rect x="519" y="291" width="1" height="4" fill="#ff3a3a"/>
<rect x="520" y="291" width="1" height="4" fill="#ff2626"/>
<rect x="521" y="291" width="1" height="4" fill="#ff1212"/>
<rect x="524" y="295" width="1" height="5" fill="#b2b2b2"/>
<rect x="522" y="295" width="5" height="1" fill="#b2b2b2"/>
<rect x="529" y="295" width="1" height="4" fill="#b2b2b2"/>
<rect x="527" y="295" width="5" height="1" fill="#b2b2b2"/>
<rect x="533" y="295" width="1" height="5" fill="#b2b2b2"/>
<rect x="531" y="295" width="5" height="1" fill="#b2b2b2"/>
<rect x="538" y="295" width="1" height="4" fill="#b2b2b2"/>
<rect x="536" y="295" width="5" height="1" fill="#b2b2b2"/>
<rect x="542" y="295" width="1" height="11" fill="#b2b2b2"/>
<rect x="540" y="296" width="5" height="8" fill="#9ca0a0"/>
<rect x="541" y="297" width="1" height="6" fill="#ff3a3a"/>
<rect x="542" y="297" width="1" height="6" fill="#ff2626"/>
<rect x="543" y="297" width="1" height="6" fill="#ff1212"/>
<rect x="547" y="300" width="1" height="6" fill="#b2b2b2"/>
<rect x="545" y="303" width="5" height="1" fill="#b2b2b2"/>
<rect x="551" y="305" width="1" height="10" fill="#b2b2b2"/>
<rect x="549" y="305" width="5" height="9" fill="#9ca0a0"/>
<rect x="550" y="306" width="1" height="7" fill="#ff3a3a"/>
<rect x="551" y="306" width="1" height="7" fill="#ff2626"/>
<rect x="552" y="306" width="1" height="7" fill="#ff1212"/>
<rect x="556" y="311" width="1" height="4" fill="#b2b2b2"/>
<rect x="554" y="311" width="5" height="3" fill="#9ca0a0"/>
<rect x="555" y="312" width="1" height="1" fill="#22ff80"/>
<rect x="556" y="312" width="1" height="1" fill="#10fc6e"/>
<rect x="557" y="312" width="1" height="1" fill="#00f85c"/>
<rect x="560" y="309" width="1" height="4" fill="#b2b2b2"/>
<rect x="558" y="310" width="5" height="1" fill="#b2b2b2"/>
<rect x="565" y="304" width="1" height="7" fill="#b2b2b2"/>
<rect x="563" y="304" width="5" height="7" fill="#9ca0a0"/>
<rect x="564" y="305" width="1" height="5" fill="#22ff80"/>
<rect x="565" y="305" width="1" height="5" fill="#10fc6e"/>
<rect x="566" y="305" width="1" height="5" fill="#00f85c"/>
<rect x="569" y="304" width="1" height="45" fill="#b2b2b2"/>
<rect x="567" y="304" width="5" height="1" fill="#b2b2b2"/>
<rect x="574" y="301" width="1" height="8" fill="#b2b2b2"/>
<rect x="572" y="304" width="5" height="2" fill="#b2b2b2"/>
<rect x="578" y="301" width="1" height="4" fill="#b2b2b2"/>
<rect x="576" y="302" width="5" height="2" fill="#b2b2b2"/>
<rect x="583" y="299" width="1" height="4" fill="#b2b2b2"/>
<rect x="581" y="301" width="5" height="1" fill="#b2b2b2"/>
<rect x="587" y="301" width="1" height="6" fill="#b2b2b2"/>
<rect x="585" y="301" width="5" height="4" fill="#9ca0a0"/>
<rect x="586" y="302" width="1" height="2" fill="#ff3a3a"/>
<rect x="587" y="302" width="1" height="2" fill="#ff2626"/>
<rect x="588" y="302" width="1" height="2" fill="#ff1212"/>
<rect x="592" y="301" width="1" height="9" fill="#b2b2b2"/>
<rect x="590" y="304" width="5" height="6" fill="#9ca0a0"/>
<rect x="591" y="305" width="1" height="4" fill="#ff3a3a"/>
<rect x="592" y="305" width="1" height="4" fill="#ff2626"/>
<rect x="593" y="305" width="1" height="4" fill="#ff1212"/>
<rect x="596" y="309" width="1" height="4" fill="#b2b2b2"/>
<rect x="594" y="310" width="5" height="1" fill="#b2b2b2"/>
<rect x="601" y="309" width="1" height="4" fill="#b2b2b2"/>
<rect x="599" y="310" width="5" height="1" fill="#b2b2b2"/>
<rect x="605" y="304" width="1" height="7" fill="#b2b2b2"/>
<rect x="603" y="306" width="5" height="5" fill="#9ca0a0"/>
<rect x="604" y="307" width="1" height="3" fill="#22ff80"/>
<rect x="605" y="307" width="1" height="3" fill="#10fc6e"/>
<rect x="606" y="307" width="1" height="3" fill="#00f85c"/>
<rect x="610" y="305" width="1" height="4" fill="#b2b2b2"/>
<rect x="608" y="306" width="5" height="1" fill="#b2b2b2"/>
<rect x="614" y="298" width="1" height="9" fill="#b2b2b2"/>
<rect x="612" y="299" width="5" height="8" fill="#9ca0a0"/>
<rect x="613" y="300" width="1" height="6" fill="#22ff80"/>
<rect x="614" y="300" width="1" height="6" fill="#10fc6e"/>
<rect x="615" y="300" width="1" height="6" fill="#00f85c"/>
</g>
<polyline points="282.5,224.4 708.75,330.5" fill="none" stroke="#3ab2f0" stroke-width="1.4"/>
<polyline points="112.25,116.25 116.25,120 121.25,122.5 127.5,128.1 135,135 142.5,141.25 150,148.1 168.1,170 177.5,182.5 185,192.5 190,200 195,205 205,211.9 215,218.75 227.5,227.5 233.75,230.5 242.5,236.9 252.5,240.6 261.25,242.5 271.25,245 280,247.9 292.5,248.5 305,249.75 317.5,250.25 323.75,249.4 327.5,248.9 336.25,250.6 345,254.5 357.5,257.5 370,259.2 382.5,260.3 390,261.25 397.5,263.75 402.5,266 410,268.5 418.75,269.8 427.5,273.1 435,275.4 443.75,278.75 455,281.25 462.5,283.5 472.5,285 487.5,286.25 500,285.6 512.5,287.5 528.75,288.1 537.5,290.6 550,293.75 555,294 565,296.5 575,298 583,298.5 602,298.5 605,299.5 614.5,299.5" fill="none" stroke="#f05cf0" stroke-width="1.15"/>
<polyline points="22.5,89.4 30,84 40,76 53,70 56,70 59,72.5 63,79 67,86 71,93 75,100 78.5,107.5 81,115 83.5,120 87.5,128.75 90,135 98.75,158.75 101.9,166.25 106.25,169.4 110,170.6 117.5,179.4 122.5,186.25 128.75,192.5 136.25,197.5 143.75,199.4 148.75,200.6 153.75,206.25 160,212.1 169.75,215.1 175.75,219.6 181.75,226 186.25,232.75 190,239.5 193,244.75 196,246.25 202,248.5 209.5,248.9 215,250 220,253.1 226.25,256.25 232.5,254 241.25,254.4 248.75,258.1 255,261.9 259.4,261 267.5,256.25 280,248.1 287.5,241.9 295,236.9 300,235 307.5,237.5 317.5,242.75 323.75,245.6 332.5,253.1 338.75,260.6 345,266.9 352.5,272.5 360,276.9 367.5,280 373.75,282.5 381.25,283.75 390,282.75 397.5,280.8 407.5,279.2 416.25,277.5 427.5,276.6 435,276.5 442.5,279.4 450,281.9 457.5,288.1 465,292.5 472.5,296.25 477.5,296.9 487.5,298.5 493.75,296.25 502.5,293.1 512.5,290 522.5,289 531.25,289.75 540,291.9 547.5,295 555,299.4 560,302.25 570,303.5 578,305.5 585,306.5 603,306.5 611,306 614.5,305.8" fill="none" stroke="#1690f0" stroke-width="1.15" stroke-dasharray="4,4"/>
</g>
<g clip-path="url(#cpV)">
<g class="c">
<rect x="3" y="405" width="3" height="23" fill="#de0000"/>
<rect x="4" y="405" width="1" height="23" fill="#cc0000"/>
<rect x="8" y="410" width="3" height="18" fill="#00ff00"/>
<rect x="12" y="402" width="3" height="26" fill="#00ff00"/>
<rect x="17" y="397" width="3" height="31" fill="#de0000"/>
<rect x="18" y="397" width="1" height="31" fill="#cc0000"/>
<rect x="21" y="389" width="3" height="39" fill="#00ff00"/>
<rect x="26" y="386" width="3" height="42" fill="#de0000"/>
<rect x="27" y="386" width="1" height="42" fill="#cc0000"/>
<rect x="30" y="396" width="3" height="32" fill="#de0000"/>
<rect x="31" y="396" width="1" height="32" fill="#cc0000"/>
<rect x="35" y="353" width="3" height="75" fill="#00ff00"/>
<rect x="39" y="397" width="3" height="31" fill="#de0000"/>
<rect x="40" y="397" width="1" height="31" fill="#cc0000"/>
<rect x="44" y="381" width="3" height="47" fill="#de0000"/>
<rect x="45" y="381" width="1" height="47" fill="#cc0000"/>
<rect x="48" y="387" width="3" height="41" fill="#de0000"/>
<rect x="49" y="387" width="1" height="41" fill="#cc0000"/>
<rect x="53" y="402" width="3" height="26" fill="#00ff00"/>
<rect x="57" y="379" width="3" height="49" fill="#de0000"/>
<rect x="58" y="379" width="1" height="49" fill="#cc0000"/>
<rect x="62" y="353" width="3" height="75" fill="#de0000"/>
<rect x="63" y="353" width="1" height="75" fill="#cc0000"/>
<rect x="66" y="353" width="3" height="75" fill="#00ff00"/>
<rect x="71" y="353" width="3" height="75" fill="#de0000"/>
<rect x="72" y="353" width="1" height="75" fill="#cc0000"/>
<rect x="75" y="353" width="3" height="75" fill="#00ff00"/>
<rect x="79" y="353" width="3" height="75" fill="#de0000"/>
<rect x="80" y="353" width="1" height="75" fill="#cc0000"/>
<rect x="84" y="387" width="3" height="41" fill="#00ff00"/>
<rect x="88" y="380" width="3" height="48" fill="#de0000"/>
<rect x="89" y="380" width="1" height="48" fill="#cc0000"/>
<rect x="93" y="379" width="3" height="49" fill="#de0000"/>
<rect x="94" y="379" width="1" height="49" fill="#cc0000"/>
<rect x="97" y="365" width="3" height="63" fill="#de0000"/>
<rect x="98" y="365" width="1" height="63" fill="#cc0000"/>
<rect x="102" y="392" width="3" height="36" fill="#de0000"/>
<rect x="103" y="392" width="1" height="36" fill="#cc0000"/>
<rect x="106" y="381" width="3" height="47" fill="#00ff00"/>
<rect x="111" y="388" width="3" height="40" fill="#de0000"/>
<rect x="112" y="388" width="1" height="40" fill="#cc0000"/>
<rect x="115" y="361" width="3" height="67" fill="#de0000"/>
<rect x="116" y="361" width="1" height="67" fill="#cc0000"/>
<rect x="120" y="378" width="3" height="50" fill="#de0000"/>
<rect x="121" y="378" width="1" height="50" fill="#cc0000"/>
<rect x="124" y="392" width="3" height="36" fill="#00ff00"/>
<rect x="129" y="404" width="3" height="24" fill="#00ff00"/>
<rect x="133" y="405" width="3" height="23" fill="#00ff00"/>
<rect x="138" y="395" width="3" height="33" fill="#de0000"/>
<rect x="139" y="395" width="1" height="33" fill="#cc0000"/>
<rect x="142" y="384" width="3" height="44" fill="#00ff00"/>
<rect x="147" y="398" width="3" height="30" fill="#de0000"/>
<rect x="148" y="398" width="1" height="30" fill="#cc0000"/>
<rect x="151" y="364" width="3" height="64" fill="#de0000"/>
<rect x="152" y="364" width="1" height="64" fill="#cc0000"/>
<rect x="156" y="353" width="3" height="75" fill="#00ff00"/>
<rect x="160" y="390" width="3" height="38" fill="#de0000"/>
<rect x="161" y="390" width="1" height="38" fill="#cc0000"/>
<rect x="165" y="396" width="3" height="32" fill="#00ff00"/>
<rect x="169" y="408" width="3" height="20" fill="#de0000"/>
<rect x="170" y="408" width="1" height="20" fill="#cc0000"/>
<rect x="174" y="404" width="3" height="24" fill="#de0000"/>
<rect x="175" y="404" width="1" height="24" fill="#cc0000"/>
<rect x="178" y="396" width="3" height="32" fill="#00ff00"/>
<rect x="183" y="376" width="3" height="52" fill="#de0000"/>
<rect x="184" y="376" width="1" height="52" fill="#cc0000"/>
<rect x="187" y="376" width="3" height="52" fill="#de0000"/>
<rect x="188" y="376" width="1" height="52" fill="#cc0000"/>
<rect x="192" y="383" width="3" height="45" fill="#00ff00"/>
<rect x="196" y="399" width="3" height="29" fill="#00ff00"/>
<rect x="201" y="409" width="3" height="19" fill="#de0000"/>
<rect x="202" y="409" width="1" height="19" fill="#cc0000"/>
<rect x="205" y="397" width="3" height="31" fill="#00ff00"/>
<rect x="210" y="396" width="3" height="32" fill="#de0000"/>
<rect x="211" y="396" width="1" height="32" fill="#cc0000"/>
<rect x="214" y="400" width="3" height="28" fill="#de0000"/>
<rect x="215" y="400" width="1" height="28" fill="#cc0000"/>
<rect x="219" y="411" width="3" height="17" fill="#de0000"/>
<rect x="220" y="411" width="1" height="17" fill="#cc0000"/>
<rect x="223" y="413" width="3" height="15" fill="#de0000"/>
<rect x="224" y="413" width="1" height="15" fill="#cc0000"/>
<rect x="227" y="410" width="3" height="18" fill="#00ff00"/>
<rect x="232" y="416" width="3" height="12" fill="#de0000"/>
<rect x="233" y="416" width="1" height="12" fill="#cc0000"/>
<rect x="236" y="411" width="3" height="17" fill="#de0000"/>
<rect x="237" y="411" width="1" height="17" fill="#cc0000"/>
<rect x="241" y="408" width="3" height="20" fill="#00ff00"/>
<rect x="245" y="402" width="3" height="26" fill="#de0000"/>
<rect x="246" y="402" width="1" height="26" fill="#cc0000"/>
<rect x="250" y="417" width="3" height="11" fill="#00ff00"/>
<rect x="254" y="408" width="3" height="20" fill="#00ff00"/>
<rect x="259" y="385" width="3" height="43" fill="#00ff00"/>
<rect x="263" y="388" width="3" height="40" fill="#00ff00"/>
<rect x="268" y="401" width="3" height="27" fill="#de0000"/>
<rect x="269" y="401" width="1" height="27" fill="#cc0000"/>
<rect x="272" y="353" width="3" height="75" fill="#de0000"/>
<rect x="273" y="353" width="1" height="75" fill="#cc0000"/>
<rect x="277" y="371" width="3" height="57" fill="#00ff00"/>
<rect x="281" y="382" width="3" height="46" fill="#00ff00"/>
<rect x="286" y="382" width="3" height="46" fill="#de0000"/>
<rect x="287" y="382" width="1" height="46" fill="#cc0000"/>
<rect x="290" y="402" width="3" height="26" fill="#de0000"/>
<rect x="291" y="402" width="1" height="26" fill="#cc0000"/>
<rect x="295" y="408" width="3" height="20" fill="#de0000"/>
<rect x="296" y="408" width="1" height="20" fill="#cc0000"/>
<rect x="299" y="402" width="3" height="26" fill="#de0000"/>
<rect x="300" y="402" width="1" height="26" fill="#cc0000"/>
<rect x="304" y="406" width="3" height="22" fill="#de0000"/>
<rect x="305" y="406" width="1" height="22" fill="#cc0000"/>
<rect x="308" y="399" width="3" height="29" fill="#de0000"/>
<rect x="309" y="399" width="1" height="29" fill="#cc0000"/>
<rect x="313" y="403" width="3" height="25" fill="#00ff00"/>
<rect x="317" y="410" width="3" height="18" fill="#00ff00"/>
<rect x="322" y="414" width="3" height="14" fill="#de0000"/>
<rect x="323" y="414" width="1" height="14" fill="#cc0000"/>
<rect x="326" y="414" width="3" height="14" fill="#de0000"/>
<rect x="327" y="414" width="1" height="14" fill="#cc0000"/>
<rect x="331" y="398" width="3" height="30" fill="#de0000"/>
<rect x="332" y="398" width="1" height="30" fill="#cc0000"/>
<rect x="335" y="373" width="3" height="55" fill="#de0000"/>
<rect x="336" y="373" width="1" height="55" fill="#cc0000"/>
<rect x="340" y="399" width="3" height="29" fill="#00ff00"/>
<rect x="344" y="400" width="3" height="28" fill="#de0000"/>
<rect x="345" y="400" width="1" height="28" fill="#cc0000"/>
<rect x="349" y="410" width="3" height="18" fill="#00ff00"/>
<rect x="353" y="414" width="3" height="14" fill="#00ff00"/>
<rect x="358" y="405" width="3" height="23" fill="#00ff00"/>
<rect x="362" y="418" width="3" height="10" fill="#00ff00"/>
<rect x="367" y="418" width="3" height="10" fill="#00ff00"/>
<rect x="371" y="418" width="3" height="10" fill="#de0000"/>
<rect x="372" y="418" width="1" height="10" fill="#cc0000"/>
<rect x="375" y="418" width="3" height="10" fill="#de0000"/>
<rect x="376" y="418" width="1" height="10" fill="#cc0000"/>
<rect x="380" y="399" width="3" height="29" fill="#de0000"/>
<rect x="381" y="399" width="1" height="29" fill="#cc0000"/>
<rect x="384" y="416" width="3" height="12" fill="#de0000"/>
<rect x="385" y="416" width="1" height="12" fill="#cc0000"/>
<rect x="389" y="418" width="3" height="10" fill="#00ff00"/>
<rect x="393" y="407" width="3" height="21" fill="#00ff00"/>
<rect x="398" y="405" width="3" height="23" fill="#00ff00"/>
<rect x="402" y="420" width="3" height="8" fill="#de0000"/>
<rect x="403" y="420" width="1" height="8" fill="#cc0000"/>
<rect x="407" y="414" width="3" height="14" fill="#00ff00"/>
<rect x="411" y="404" width="3" height="24" fill="#00ff00"/>
<rect x="416" y="412" width="3" height="16" fill="#de0000"/>
<rect x="417" y="412" width="1" height="16" fill="#cc0000"/>
<rect x="420" y="408" width="3" height="20" fill="#de0000"/>
<rect x="421" y="408" width="1" height="20" fill="#cc0000"/>
<rect x="425" y="418" width="3" height="10" fill="#de0000"/>
<rect x="426" y="418" width="1" height="10" fill="#cc0000"/>
<rect x="429" y="413" width="3" height="15" fill="#de0000"/>
<rect x="430" y="413" width="1" height="15" fill="#cc0000"/>
<rect x="434" y="416" width="3" height="12" fill="#de0000"/>
<rect x="435" y="416" width="1" height="12" fill="#cc0000"/>
<rect x="438" y="411" width="3" height="17" fill="#00ff00"/>
<rect x="443" y="413" width="3" height="15" fill="#de0000"/>
<rect x="444" y="413" width="1" height="15" fill="#cc0000"/>
<rect x="447" y="404" width="3" height="24" fill="#de0000"/>
<rect x="448" y="404" width="1" height="24" fill="#cc0000"/>
<rect x="452" y="392" width="3" height="36" fill="#de0000"/>
<rect x="453" y="392" width="1" height="36" fill="#cc0000"/>
<rect x="456" y="414" width="3" height="14" fill="#00ff00"/>
<rect x="461" y="409" width="3" height="19" fill="#de0000"/>
<rect x="462" y="409" width="1" height="19" fill="#cc0000"/>
<rect x="465" y="400" width="3" height="28" fill="#de0000"/>
<rect x="466" y="400" width="1" height="28" fill="#cc0000"/>
<rect x="470" y="401" width="3" height="27" fill="#00ff00"/>
<rect x="474" y="380" width="3" height="48" fill="#00ff00"/>
<rect x="479" y="413" width="3" height="15" fill="#de0000"/>
<rect x="480" y="413" width="1" height="15" fill="#cc0000"/>
<rect x="483" y="401" width="3" height="27" fill="#00ff00"/>
<rect x="488" y="385" width="3" height="43" fill="#00ff00"/>
<rect x="492" y="371" width="3" height="57" fill="#00ff00"/>
<rect x="497" y="385" width="3" height="43" fill="#de0000"/>
<rect x="498" y="385" width="1" height="43" fill="#cc0000"/>
<rect x="501" y="400" width="3" height="28" fill="#de0000"/>
<rect x="502" y="400" width="1" height="28" fill="#cc0000"/>
<rect x="506" y="406" width="3" height="22" fill="#de0000"/>
<rect x="507" y="406" width="1" height="22" fill="#cc0000"/>
<rect x="510" y="408" width="3" height="20" fill="#de0000"/>
<rect x="511" y="408" width="1" height="20" fill="#cc0000"/>
<rect x="515" y="404" width="3" height="24" fill="#de0000"/>
<rect x="516" y="404" width="1" height="24" fill="#cc0000"/>
<rect x="519" y="406" width="3" height="22" fill="#de0000"/>
<rect x="520" y="406" width="1" height="22" fill="#cc0000"/>
<rect x="523" y="410" width="3" height="18" fill="#00ff00"/>
<rect x="528" y="410" width="3" height="18" fill="#00ff00"/>
<rect x="532" y="413" width="3" height="15" fill="#de0000"/>
<rect x="533" y="413" width="1" height="15" fill="#cc0000"/>
<rect x="537" y="408" width="3" height="20" fill="#de0000"/>
<rect x="538" y="408" width="1" height="20" fill="#cc0000"/>
<rect x="541" y="399" width="3" height="29" fill="#de0000"/>
<rect x="542" y="399" width="1" height="29" fill="#cc0000"/>
<rect x="546" y="403" width="3" height="25" fill="#de0000"/>
<rect x="547" y="403" width="1" height="25" fill="#cc0000"/>
<rect x="550" y="391" width="3" height="37" fill="#de0000"/>
<rect x="551" y="391" width="1" height="37" fill="#cc0000"/>
<rect x="555" y="406" width="3" height="22" fill="#00ff00"/>
<rect x="559" y="412" width="3" height="16" fill="#de0000"/>
<rect x="560" y="412" width="1" height="16" fill="#cc0000"/>
<rect x="564" y="393" width="3" height="35" fill="#00ff00"/>
<rect x="568" y="410" width="3" height="18" fill="#de0000"/>
<rect x="569" y="410" width="1" height="18" fill="#cc0000"/>
<rect x="573" y="387" width="3" height="41" fill="#de0000"/>
<rect x="574" y="387" width="1" height="41" fill="#cc0000"/>
<rect x="577" y="385" width="3" height="43" fill="#00ff00"/>
<rect x="582" y="407" width="3" height="21" fill="#00ff00"/>
<rect x="586" y="402" width="3" height="26" fill="#de0000"/>
<rect x="587" y="402" width="1" height="26" fill="#cc0000"/>
<rect x="591" y="398" width="3" height="30" fill="#de0000"/>
<rect x="592" y="398" width="1" height="30" fill="#cc0000"/>
<rect x="595" y="405" width="3" height="23" fill="#de0000"/>
<rect x="596" y="405" width="1" height="23" fill="#cc0000"/>
<rect x="600" y="419" width="3" height="9" fill="#00ff00"/>
<rect x="604" y="408" width="3" height="20" fill="#00ff00"/>
<rect x="609" y="410" width="3" height="18" fill="#00ff00"/>
<rect x="613" y="388" width="3" height="40" fill="#00ff00"/>
</g>
<polyline points="202.25,371 206.25,373.5 216.25,373.75 223.75,375.4 243.75,375.4 246.25,376.25 255,376.5 260,377.5 270,377.5 273.75,376.5 282.5,376.5 286.25,383.1 291.25,388.1 300,390.4 305,392.25 315,392.25 326.25,395.4 341.25,395.4 345,396.5 360,396.5 363.75,397.5 368.75,397.5 385,401.5 400,401.5 402.5,402.5 408.75,402.5 412.5,403.75 416.25,404.6 431.25,404.6 435,405.6 448.75,405.6 453.75,404.6 471.25,404.6 475,403.5 480,403.5 483.75,404.6 490,404.6 493,403.5 500,404.6 503.75,404.6 506.25,405.6 521.25,405.6 523.75,406.5 548.75,406.5 551.25,405.6 557.5,405.6 560,406.5 575,406.5 577.5,405.6 590,405.6 592.5,404.6 614.4,404.6" fill="none" stroke="#f0f000" stroke-width="1.2"/>
</g>
<g clip-path="url(#cpM)">
<polygon points="215,473 215,498.2 220.25,498.8 224.75,500.75 228.5,498.5 233,498.5 242.75,500.4 251.75,498.5 260,487.7 264.5,485 269,485 273.5,487.7 282.5,481.25 290,483 297.5,485.4 305,487.25 310.25,490.6 318.25,486.25 323.5,487 328,488.5 332.5,491.5 336.7,496.4 340.75,494.5 346,493.3 350.5,494.5 355,493.3 359.5,491.5 364,491 368.5,488.2 372.25,490.3 377.5,490.75 382,491.8 386.5,492.5 391,491.5 394.75,486.7 399.7,484.5 403.75,487.75 408.25,486.7 412.75,483.25 417.25,483.25 421.75,486.5 430.5,488.5 435.75,489.5 439.5,488.2 444,489.25 448.5,490.4 453.3,494.5 457.5,493.3 462,493.3 466.5,494.5 471,491.8 475.5,487.3 480,489.5 484.5,488.5 489,486.7 493.5,481.4 498,484.3 511.5,484.3 516,485.5 520.2,487.4 538.25,487.4 542.75,490.4 547.25,491.5 551.75,494.5 556.25,493.75 560.75,493.3 565.25,490.4 569,491.5 574.25,490.4 578.75,488.2 583.25,487.3 587.75,488.5 592.25,489.5 596.75,490.4 601.25,490.4 605.75,489.5 610.25,488.5 614.75,484 614.75,473" fill="url(#mr)"/>
<line x1="1" y1="473.5" x2="741" y2="473.5" stroke="#00ff00" stroke-width="1.4"/>
<polyline points="215,498.2 220.25,498.8 224.75,500.75 228.5,498.5 233,498.5 242.75,500.4 251.75,498.5 260,487.7 264.5,485 269,485 273.5,487.7 282.5,481.25 290,483 297.5,485.4 305,487.25 310.25,490.6 318.25,486.25 323.5,487 328,488.5 332.5,491.5 336.7,496.4 340.75,494.5 346,493.3 350.5,494.5 355,493.3 359.5,491.5 364,491 368.5,488.2 372.25,490.3 377.5,490.75 382,491.8 386.5,492.5 391,491.5 394.75,486.7 399.7,484.5 403.75,487.75 408.25,486.7 412.75,483.25 417.25,483.25 421.75,486.5 430.5,488.5 435.75,489.5 439.5,488.2 444,489.25 448.5,490.4 453.3,494.5 457.5,493.3 462,493.3 466.5,494.5 471,491.8 475.5,487.3 480,489.5 484.5,488.5 489,486.7 493.5,481.4 498,484.3 511.5,484.3 516,485.5 520.2,487.4 538.25,487.4 542.75,490.4 547.25,491.5 551.75,494.5 556.25,493.75 560.75,493.3 565.25,490.4 569,491.5 574.25,490.4 578.75,488.2 583.25,487.3 587.75,488.5 592.25,489.5 596.75,490.4 601.25,490.4 605.75,489.5 610.25,488.5 614.75,484" fill="none" stroke="#ffffff" stroke-width="1.2"/>
</g>
<g clip-path="url(#cpF)">
<polygon points="22,528 22,480 180,480 196.7,507 204,510.6 217.5,513.4 228.75,519 230,521 240,523.5 250,526 255.5,526.3 259,521.5 264,517 272,515 282,509 286,508.2 300,508.5 307.5,512.5 315,515.2 327,517.75 332.25,520.75 337.5,528.5 345,537.25 354,544 363,548.2 375,550.75 384,553 390,554.2 396,554.2 405,552.25 414,550.4 416,550 423.5,550.4 431,552.25 440,553 447.5,555.25 456.5,559.75 464,562 470.75,563.8 477.5,562 488,559.3 494,554.5 503,550.75 510.5,548.5 526,548.5 535,550 547,551.5 553,555.25 559.75,557.5 586,557.5 595,558.25 601,559.3 610,559.3 615,558.25 615,528" fill="url(#fg)"/>
<polyline points="22,480 180,480 196.7,507 204,510.6 217.5,513.4 228.75,519 230,521 240,523.5 250,526 255.5,526.3 259,521.5 264,517 272,515 282,509 286,508.2 300,508.5 307.5,512.5 315,515.2 327,517.75 332.25,520.75 337.5,528.5 345,537.25 354,544 363,548.2 375,550.75 384,553 390,554.2 396,554.2 405,552.25 414,550.4 416,550 423.5,550.4 431,552.25 440,553 447.5,555.25 456.5,559.75 464,562 470.75,563.8 477.5,562 488,559.3 494,554.5 503,550.75 510.5,548.5 526,548.5 535,550 547,551.5 553,555.25 559.75,557.5 586,557.5 595,558.25 601,559.3 610,559.3 615,558.25" fill="none" stroke="#b0b0b0" stroke-width="1"/>
<line x1="1" y1="528.5" x2="741" y2="528.5" stroke="#00ff00" stroke-width="1.4"/>
<polyline points="223.7,507 231,512.3 237,516 245,519.5 255,522 263,522.5 272,521.5 280,519 288,516 296,512.5 302,510.7 306,510.7 318,510.7 331.5,513.25 342,517.75 352.5,524.5 357,528.5 366,535 375,542.2 384,546.25 393,549.7 403.5,552.25 420,552.7 453.5,552.7 470,556.75 488,560.5 495.5,560.5 510.5,556.75 521,553 529,551.2 538,549.25 551.5,549.25 562,551.8 574,554.5 580,554.5 590.5,557 601,557.5 605.5,558.5 614.5,558.25" fill="none" stroke="#f0f000" stroke-width="1.3"/>
</g>
<g class="c"><rect x="6" y="8" width="1" height="11" fill="#bb2a2a"/><rect x="3" y="10" width="7" height="7" fill="#bb2a2a"/><rect x="4" y="11" width="5" height="5" fill="#f27878"/><rect x="14" y="3" width="1" height="16" fill="#14a014"/><rect x="11" y="6" width="7" height="10" fill="#14a014"/><rect x="12" y="7" width="5" height="8" fill="#66e866"/></g>
<text x="23.04" y="14.5" textLength="169.96" lengthAdjust="spacingAndGlyphs" fill="#000" style="font-weight:bold;font-size:12px">URA - GLOBAL X URANIUM ETF</text>
<text x="207.0" y="14.5" textLength="80.59" lengthAdjust="spacing" fill="#000" style="font-weight:bold;font-size:12px">18.83 (+1.67%)</text>
<text x="300.74" y="14.5" textLength="40.05" lengthAdjust="spacing" fill="#000" style="font-weight:bold;font-size:12px">Weekly</text>
<text x="348.52" y="14.5" textLength="63.7" lengthAdjust="spacing" fill="#000" style="font-weight:bold;font-size:12px">Jul 26 2013</text>
<text x="663.02" y="14.5" textLength="133.13" lengthAdjust="spacing" fill="#000" style="font-weight:bold;font-size:12px">www.ProRealTime.com</text>
<text x="2.86" y="33" textLength="29.14" lengthAdjust="spacing" fill="#a8a8a8" style="font-weight:normal;font-size:12px">Price</text>
<text x="35.58" y="33" textLength="156.08" lengthAdjust="spacing" fill="#ff60ff" style="font-weight:bold;font-size:12px">Moving average (Simple 30)</text>
<text x="195.5" y="33" textLength="155.18" lengthAdjust="spacing" fill="#0a96ff" style="font-weight:bold;font-size:12px">Moving average (Simple 10)</text>
<text x="3.0" y="346.7" textLength="93.38" lengthAdjust="spacing" fill="#a8a8a8" style="font-weight:normal;font-size:11px">© ProRealTime.com</text>
<text x="3.0" y="365" textLength="42.09" lengthAdjust="spacing" fill="#00ff00" style="font-weight:bold;font-size:12px">Volume</text>
<text x="49.08" y="365" textLength="155.72" lengthAdjust="spacing" fill="#ffff00" style="font-weight:bold;font-size:12px">Moving average (Simple 50)</text>
<text x="4.0" y="451" textLength="212.26" lengthAdjust="spacing" fill="#ffffff" style="font-weight:bold;font-size:12px">Mansfield RS (S&amp;P 500 INDEX) (52 10)</text>
<text x="2.56" y="519" textLength="138.44" lengthAdjust="spacing" fill="#a8a8a8" style="font-weight:normal;font-size:12px">Cumulativee Force Index</text>
<text x="145.06" y="519" textLength="155.36" lengthAdjust="spacing" fill="#ffff00" style="font-weight:bold;font-size:12px">Moving average (Simple 10)</text>
<text x="748" y="348.8" fill="#000" text-anchor="start" >10</text>
<text x="748" y="322.8" fill="#000" text-anchor="start" >15</text>
<text x="748" y="296.8" fill="#000" text-anchor="start" >20</text>
<text x="748" y="269.8" fill="#000" text-anchor="start" >25</text>
<text x="748" y="243.8" fill="#000" text-anchor="start" >30</text>
<text x="748" y="216.8" fill="#000" text-anchor="start" >35</text>
<text x="748" y="190.8" fill="#000" text-anchor="start" >40</text>
<text x="748" y="163.8" fill="#000" text-anchor="start" >45</text>
<text x="748" y="137.8" fill="#000" text-anchor="start" >50</text>
<text x="748" y="110.8" fill="#000" text-anchor="start" >55</text>
<text x="748" y="84.8" fill="#000" text-anchor="start" >60</text>
<text x="748" y="57.8" fill="#000" text-anchor="start" >65</text>
<text x="748" y="31.8" fill="#000" text-anchor="start" >70</text>
<text x="748" y="432.8" fill="#000" text-anchor="start" >0</text>
<text x="748" y="415.3" fill="#000" text-anchor="start" >200,000</text>
<text x="748" y="397.8" fill="#000" text-anchor="start" >400,000</text>
<text x="748" y="380.3" fill="#000" text-anchor="start" >600,000</text>
<text x="748" y="362.8" fill="#000" text-anchor="start" >800,000</text>
<text x="748" y="475.8" fill="#000" text-anchor="start" >0</text>
<text x="748" y="531.8" fill="#000" text-anchor="start" >0</text>
<text x="748" y="557.8" fill="#000" text-anchor="start" >-2,000K</text>
<text x="17.1" y="595" fill="#000" text-anchor="middle" >2011</text>
<text x="75.9" y="595" fill="#000" text-anchor="middle" >Apr</text>
<text x="134.4" y="595" fill="#000" text-anchor="middle" >Jul</text>
<text x="193.3" y="595" fill="#000" text-anchor="middle" >Oct</text>
<text x="251" y="595" fill="#000" text-anchor="middle" >2012</text>
<text x="309" y="595" fill="#000" text-anchor="middle" >Apr</text>
<text x="368.1" y="595" fill="#000" text-anchor="middle" >Jul</text>
<text x="426" y="595" fill="#000" text-anchor="middle" >Oct</text>
<text x="488.75" y="595" fill="#000" text-anchor="middle" >2013</text>
<text x="541.6" y="595" fill="#000" text-anchor="middle" >Apr</text>
<text x="601.2" y="595" fill="#000" text-anchor="middle" >Jul</text>
<text x="664.1" y="595" fill="#000" text-anchor="middle" >Oct</text>
<text x="721.9" y="595" fill="#000" text-anchor="middle" >2014</text>
<rect class="c" x="746" y="291" width="41" height="17" fill="#a8a8e0"/>
<rect class="c" x="747" y="292" width="39" height="15" fill="url(#dk)"/>
<text x="748.3" y="303.8" fill="#ff60ff" text-anchor="start" >18.958</text>
<rect class="c" x="746" y="297" width="41" height="17" fill="#a8a8e0"/>
<rect class="c" x="747" y="298" width="39" height="15" fill="url(#dk)"/>
<text x="748.3" y="309.8" fill="#0a96ff" text-anchor="start" >17.621</text>
<rect class="c" x="746" y="291" width="34" height="17" fill="#a8a8e0"/>
<rect class="c" x="747" y="292" width="32" height="15" fill="url(#yl)"/>
<text x="748.3" y="303.8" fill="#000" text-anchor="start" >18.83</text>
<rect class="c" x="746" y="380" width="48" height="17" fill="#a8a8e0"/>
<rect class="c" x="747" y="381" width="46" height="15" fill="url(#dk)"/>
<text x="748.3" y="392.8" fill="#00ff00" text-anchor="start" >453,623</text>
<rect class="c" x="746" y="396" width="48" height="17" fill="#a8a8e0"/>
<rect class="c" x="747" y="397" width="46" height="15" fill="url(#dk)"/>
<text x="748.3" y="408.8" fill="#ffff00" text-anchor="start" >280,760</text>
<rect class="c" x="746" y="476" width="45" height="17" fill="#a8a8e0"/>
<rect class="c" x="747" y="477" width="43" height="15" fill="url(#dk)"/>
<text x="748.3" y="488.8" fill="#ffffff" text-anchor="start" >-1.5459</text>
<rect class="c" x="746" y="550" width="46" height="17" fill="#a8a8e0"/>
<rect class="c" x="747" y="551" width="44" height="15" fill="url(#dk)"/>
<text x="748.3" y="562.8" fill="#bcbcbc" text-anchor="start" style="font-weight:normal">-2,301K</text>
</svg></body></html>
